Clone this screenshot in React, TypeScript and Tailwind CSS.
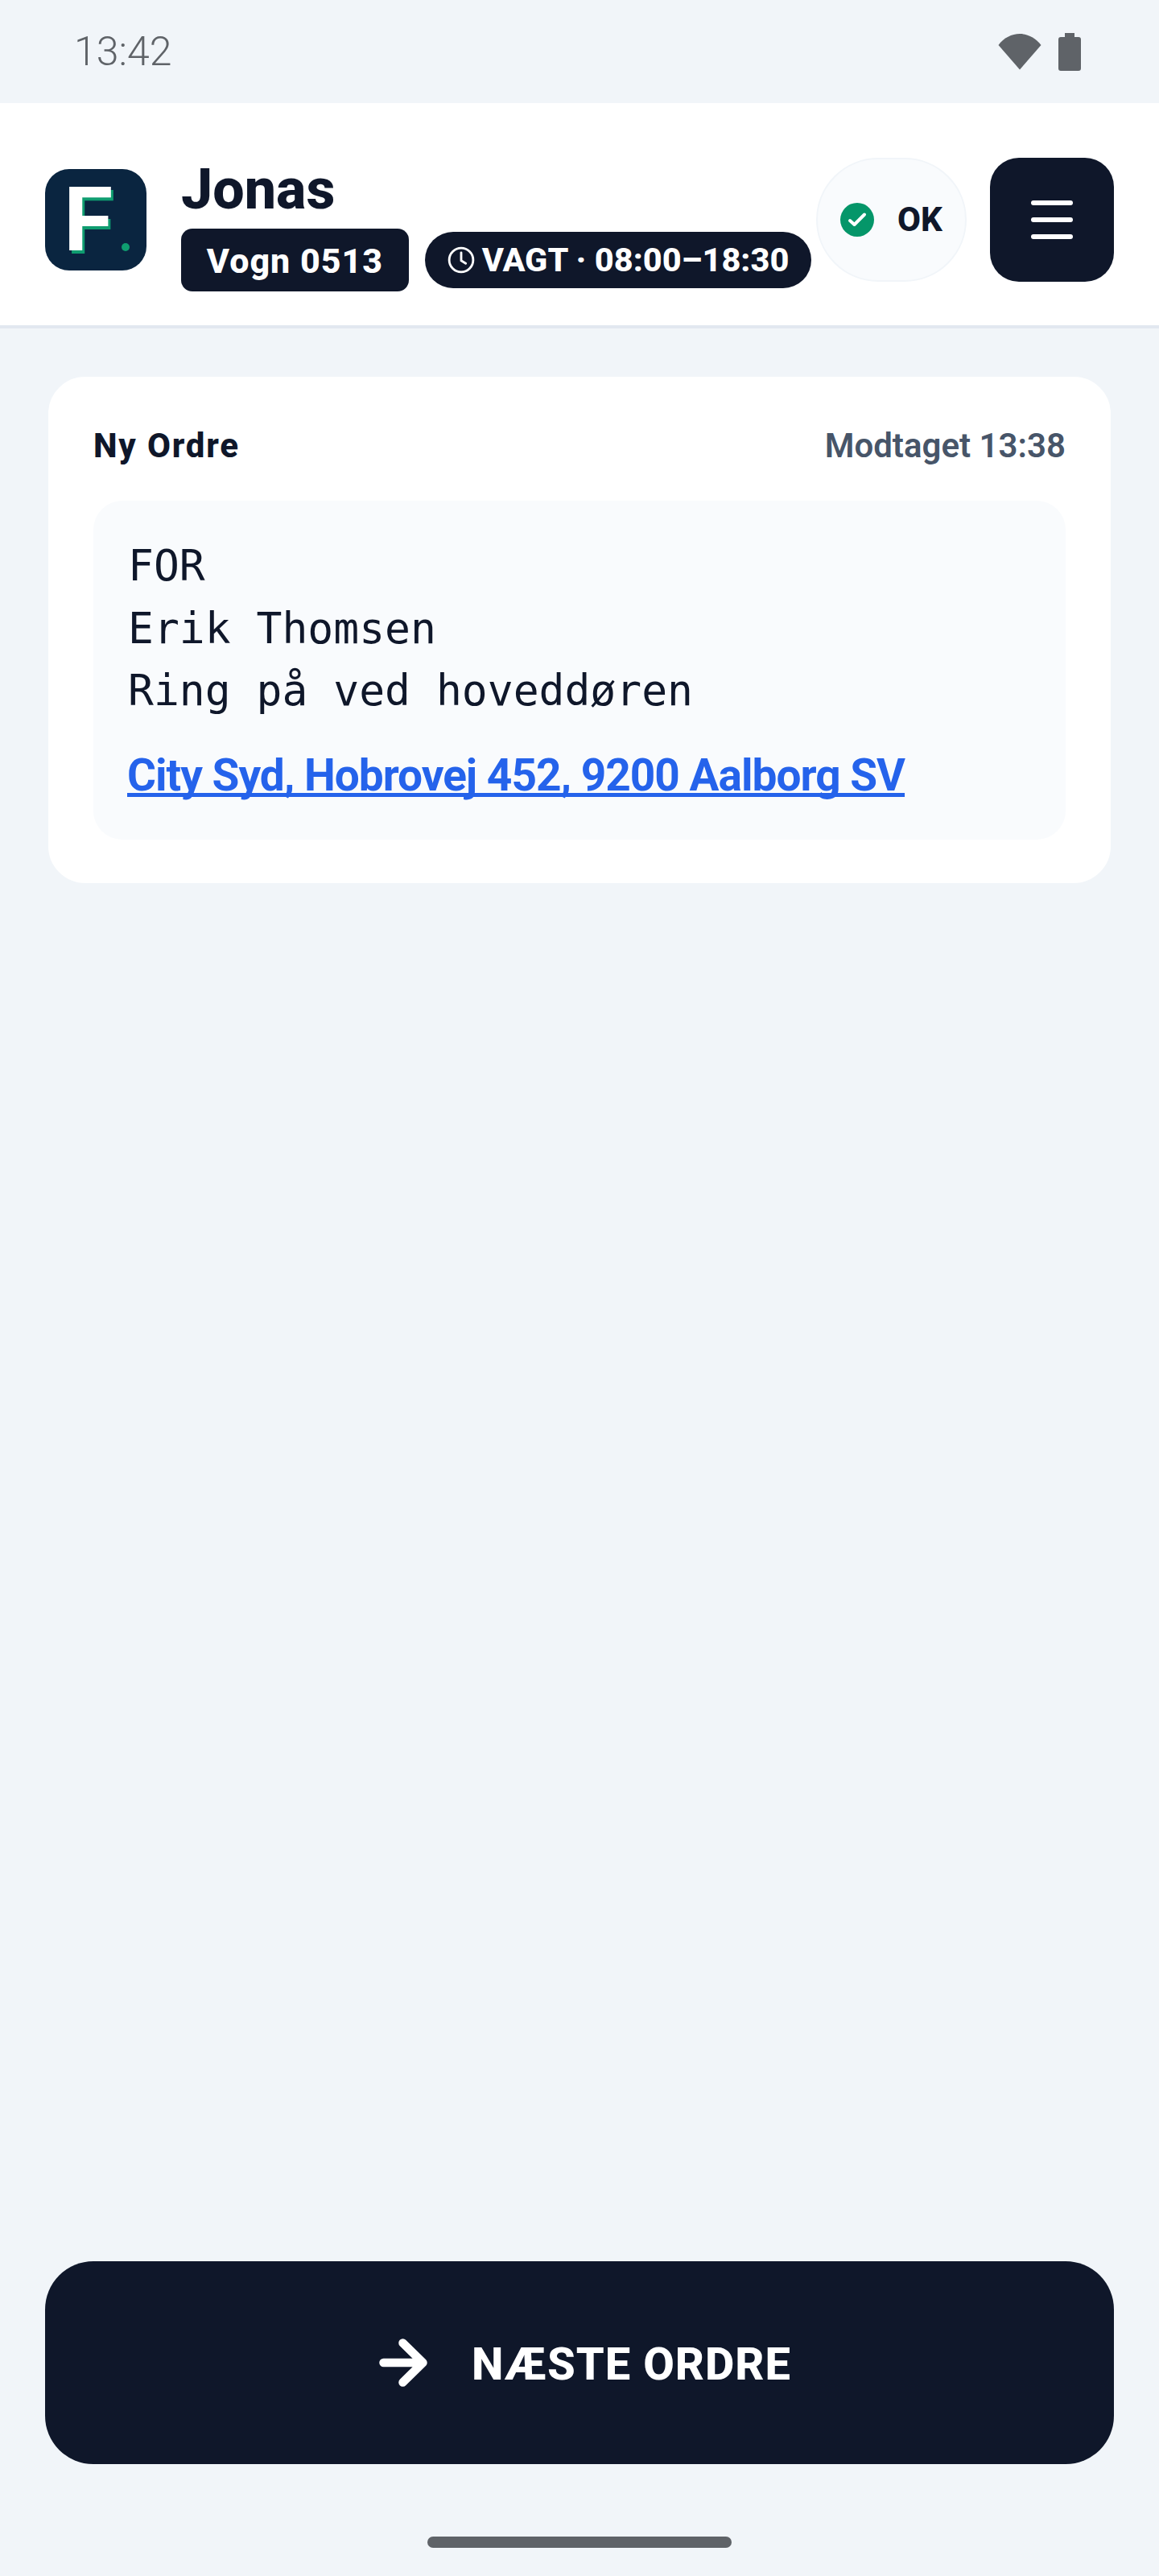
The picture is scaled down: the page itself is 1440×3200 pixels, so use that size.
const roboto = "font-['Roboto',sans-serif]";

function StatusBar() {
  return (
    <div className="flex h-[128px] items-center justify-between pl-[92px] pr-[97px] bg-[#f1f5f9]">
      <span className="text-[50px] font-[350] leading-none text-[#5f6368]">13:42</span>
      <div className="flex items-center gap-[21px]">
        <svg width="54" height="46" viewBox="0 0 54 46" className="block">
          <path d="M27 45.5 L0.5 15 C 7 6 17 1 27 1 C 37 1 47 6 53.5 15 Z" fill="#5f6368" />
        </svg>
        <svg width="28" height="47" viewBox="0 0 28 47" className="block">
          <path d="M8 0 H20 V5 H25 A3 3 0 0 1 28 8 V44 A3 3 0 0 1 25 47 H3 A3 3 0 0 1 0 44 V8 A3 3 0 0 1 3 5 H8 Z" fill="#5f6368" />
        </svg>
      </div>
    </div>
  );
}

function Logo() {
  return (
    <div className="relative flex h-[126px] w-[126px] shrink-0 items-start rounded-[30px] bg-[#0a2540] pl-[23px]">
      <span className="font-['Inter',sans-serif] text-[108px] font-bold leading-[124px] text-white [text-shadow:3px_4px_0_#0f9d70]">F</span>
      <span className="absolute left-[95px] top-[92px] h-[10px] w-[10px] rounded-full bg-[#0f9d70]" />
    </div>
  );
}

function Header() {
  return (
    <div className="flex h-[280px] items-center justify-between border-b-[4px] border-[#e2e8f0] bg-white px-[56px] pt-[14px]">
      <Logo />
      <div className="ml-[43px] flex flex-1 flex-col pt-[12px]">
        <div className="text-[70px] font-extrabold leading-[76px] text-[#0f172a]">Jonas</div>
        <div className="mt-[11px] flex items-center gap-[20px]">
          <span className="flex h-[78px] w-[283px] items-center justify-center rounded-[14px] bg-[#0f172a] pt-[4px] text-[43px] font-extrabold tracking-[1px] text-white">
            Vogn 0513
          </span>
          <span className="flex h-[70px] w-[480px] items-center justify-center gap-[9px] rounded-full bg-[#0f172a] text-[41.5px] font-extrabold text-white">
            <svg width="34" height="34" viewBox="0 0 24 24" fill="none" stroke="#fff" strokeWidth="2" strokeLinecap="round">
              <circle cx="12" cy="12" r="10.5" />
              <path d="M12 5.5V12.5L16 15" />
            </svg>
            <span className="pt-[2px]">VAGT · 08:00–18:30</span>
          </span>
        </div>
      </div>
      <div className="flex items-center gap-[29px]">
        <div className="flex h-[154px] w-[187px] items-center justify-center gap-[29px] rounded-full border-[2px] border-[#f1f5f9] bg-[#f9fbfd]">
          <span className="flex h-[42px] w-[42px] items-center justify-center rounded-full bg-[#059669]">
            <svg width="30" height="30" viewBox="0 0 30 30" fill="none" stroke="#fff" strokeWidth="4" strokeLinecap="round" strokeLinejoin="round">
              <path d="M6 16L11.5 21L24 8.5" />
            </svg>
          </span>
          <span className="text-[42px] font-extrabold leading-none text-[#0f172a]">OK</span>
        </div>
        <div className="flex h-[154px] w-[154px] flex-col items-center justify-center gap-[15px] rounded-[36px] bg-[#0f172a]">
          <span className="h-[6px] w-[52px] rounded-full bg-white" />
          <span className="h-[6px] w-[52px] rounded-full bg-white" />
          <span className="h-[6px] w-[52px] rounded-full bg-white" />
        </div>
      </div>
    </div>
  );
}

function OrderCard() {
  return (
    <div className="mx-[58px] mt-[58px] rounded-[48px] border-[2px] border-[#f1f5f9] bg-white px-[56px] pb-[54px] pt-[54px]">
      <div className="flex items-center justify-between">
        <span className="text-[42px] font-extrabold tracking-[1.8px] text-[#0f172a]">Ny Ordre</span>
        <span className="text-[42px] font-semibold text-[#475569]">Modtaget 13:38</span>
      </div>
      <div className="mt-[37px] rounded-[36px] bg-[#f9fbfd] px-[43px] pb-[44px] pt-[42px]">
        <div className="font-['DejaVu_Sans_Mono',monospace] text-[53px] leading-[77.5px] text-[#0f172a]">
          <div>FOR</div>
          <div>Erik Thomsen</div>
          <div>Ring på ved hoveddøren</div>
        </div>
        <div className="mt-[30px] -ml-[1px] text-[55px] font-bold leading-[72px] tracking-[-1px] text-[#2563eb] underline [text-decoration-skip-ink:none]">
          City Syd, Hobrovej 452, 9200 Aalborg SV
        </div>
      </div>
    </div>
  );
}

function NextButton() {
  return (
    <div className="flex h-[252px] items-center justify-center gap-[55px] rounded-[60px] bg-[#0f172a] pl-[14px] text-white">
      <svg width="60" height="60" viewBox="0 0 60 60" fill="none" stroke="#fff" strokeWidth="10.5" strokeLinecap="round" strokeLinejoin="round">
        <path d="M5.5 30H53M29.5 5.5L54.5 30L29.5 54.5" />
      </svg>
      <span className="mt-[3px] text-[56px] font-extrabold leading-none tracking-[1px]">NÆSTE ORDRE</span>
    </div>
  );
}

export default function App() {
  return (
    <div className={`flex h-[3200px] flex-col bg-[#f1f5f9] ${roboto}`}>
      <StatusBar />
      <Header />
      <div className="flex-1">
        <OrderCard />
      </div>
      <div className="px-[56px]">
        <NextButton />
      </div>
      <div className="flex h-[139px] justify-center pt-[90px]">
        <div className="h-[14px] w-[378px] rounded-full bg-[#5f6368]" />
      </div>
    </div>
  );
}
